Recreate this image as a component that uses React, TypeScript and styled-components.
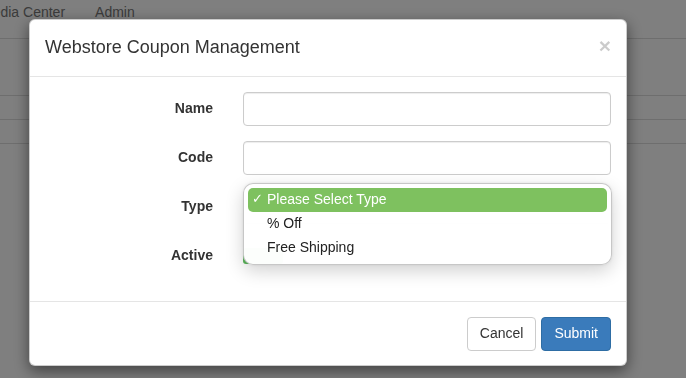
import styled, { createGlobalStyle } from "styled-components";

const GlobalStyle = createGlobalStyle`
  html, body {
    margin: 0;
    padding: 0;
    background: #fff;
    overflow: hidden;
  }
  body {
    font-family: "Liberation Sans", Arial, Helvetica, sans-serif;
    font-size: 14px;
    line-height: 1.42857;
    color: #333;
  }
  * {
    box-sizing: border-box;
  }
`;

const Page = styled.div`
  width: 686px;
  height: 378px;
`;

const Nav = styled.ul`
  display: flex;
  list-style: none;
  margin: 0 0 0 -34px;
  padding: 0;
  height: 39px;
  border-bottom: 1px solid #ddd;
`;

const NavItem = styled.li`
  padding: 3px 15px 0;
  color: #777;
`;

const Band = styled.div<{ $h: number }>`
  height: ${(p) => p.$h}px;
  border-bottom: 1px solid #ddd;
`;

const Backdrop = styled.div`
  position: fixed;
  inset: 0;
  background: rgba(0, 0, 0, 0.5);
  padding: 19px 0 0 29px;
`;

const Modal = styled.div`
  width: 598px;
  background: #fff;
  border: 1px solid rgba(0, 0, 0, 0.2);
  border-radius: 6px;
  box-shadow: 0 5px 15px rgba(0, 0, 0, 0.5);
`;

const Header = styled.div`
  display: flex;
  justify-content: space-between;
  align-items: center;
  padding: 15px;
  border-bottom: 1px solid #e5e5e5;
`;

const Title = styled.h4`
  margin: 0;
  font-size: 18px;
  font-weight: 500;
  line-height: 1.42857;
  color: #333;
`;

const Close = styled.button`
  border: 0;
  background: none;
  padding: 0;
  font-family: "Liberation Sans", Arial, sans-serif;
  font-size: 21px;
  font-weight: bold;
  line-height: 1;
  color: #000;
  opacity: 0.2;
  margin-top: -4px;
`;

const Body = styled.div`
  padding: 15px 15px 28px;
`;

const Row = styled.div<{ $last?: boolean }>`
  display: grid;
  grid-template-columns: 1fr 368px;
  column-gap: 30px;
  align-items: center;
  margin-bottom: ${(p) => (p.$last ? 0 : 15)}px;
`;

const Label = styled.label`
  text-align: right;
  font-weight: bold;
  color: #333;
`;

const Input = styled.input`
  display: block;
  width: 100%;
  height: 34px;
  padding: 6px 12px;
  border: 1px solid #ccc;
  border-radius: 4px;
  box-shadow: inset 0 1px 1px rgba(0, 0, 0, 0.075);
  font: inherit;
  outline: none;
`;

const SelectWrap = styled.div`
  position: relative;
  height: 34px;
`;

const SelectBox = styled.div`
  height: 34px;
  border: 1px solid #ccc;
  border-radius: 4px;
`;

const Popup = styled.ul`
  position: absolute;
  top: -7px;
  left: 0;
  width: 369px;
  margin: 0;
  padding: 4px;
  list-style: none;
  background: rgba(255, 255, 255, 0.98);
  border: 1px solid rgba(0, 0, 0, 0.22);
  border-radius: 10px;
  box-shadow: 0 6px 18px rgba(0, 0, 0, 0.18), 0 0 3px rgba(0, 0, 0, 0.08);
  z-index: 2;
`;

const Option = styled.li<{ $selected?: boolean }>`
  display: flex;
  align-items: center;
  height: 24px;
  padding-left: 4px;
  border-radius: 5px;
  font-size: 14px;
  background: ${(p) => (p.$selected ? "#7ec15f" : "transparent")};
  color: ${(p) => (p.$selected ? "#fff" : "#222")};
`;

const Check = styled.span`
  display: inline-block;
  width: 15px;
  font-size: 13px;
`;

const SwitchCell = styled.div`
  height: 34px;
  display: flex;
  align-items: center;
`;

const Toggle = styled.div`
  width: 40px;
  height: 16px;
  border-radius: 3px;
  background: #5cb85c;
`;

const Footer = styled.div`
  display: flex;
  justify-content: flex-end;
  gap: 5px;
  padding: 15px 15px 14px;
  border-top: 1px solid #e5e5e5;
`;

const Button = styled.button<{ $primary?: boolean }>`
  height: 34px;
  padding: 6px 12px;
  font-family: "Liberation Sans", Arial, sans-serif;
  font-size: 14px;
  line-height: 1.42857;
  border-radius: 4px;
  border: 1px solid ${(p) => (p.$primary ? "#2e6da4" : "#ccc")};
  background: ${(p) => (p.$primary ? "#3a7bbb" : "#fff")};
  color: ${(p) => (p.$primary ? "#fff" : "#333")};
`;

export default function App() {
  return (
    <>
      <GlobalStyle />
      <Page>
        <Nav>
          <NavItem>Media Center</NavItem>
          <NavItem>Admin</NavItem>
        </Nav>
        <Band $h={57} />
        <Band $h={24} />
        <Band $h={24} />
      </Page>
      <Backdrop>
        <Modal>
          <Header>
            <Title>Webstore Coupon Management</Title>
            <Close>×</Close>
          </Header>
          <Body>
            <Row>
              <Label>Name</Label>
              <Input />
            </Row>
            <Row>
              <Label>Code</Label>
              <Input />
            </Row>
            <Row>
              <Label>Type</Label>
              <SelectWrap>
                <SelectBox />
                <Popup>
                  <Option $selected>
                    <Check>✓</Check>Please Select Type
                  </Option>
                  <Option>
                    <Check />% Off
                  </Option>
                  <Option>
                    <Check />Free Shipping
                  </Option>
                </Popup>
              </SelectWrap>
            </Row>
            <Row $last>
              <Label>Active</Label>
              <SwitchCell>
                <Toggle />
              </SwitchCell>
            </Row>
          </Body>
          <Footer>
            <Button>Cancel</Button>
            <Button $primary>Submit</Button>
          </Footer>
        </Modal>
      </Backdrop>
    </>
  );
}
